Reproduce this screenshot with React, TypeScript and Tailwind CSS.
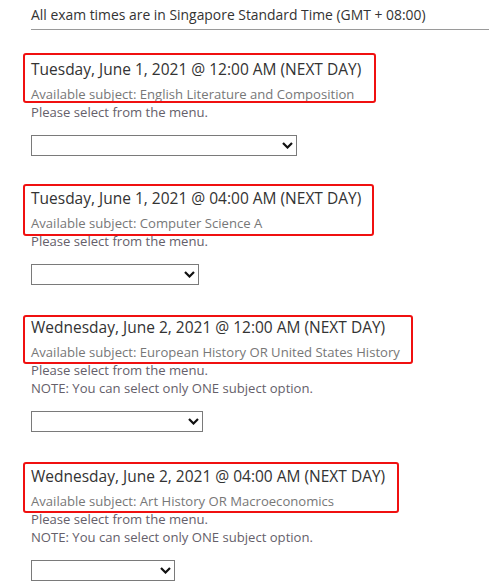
const exams = [
  {
    when: 'Tuesday, June 1, 2021 @ 12:00 AM (NEXT DAY)',
    subject: 'English Literature and Composition',
    note: false,
    selectW: 'w-[266px]',
    box: 'top-[-6px] w-[353px] h-[50px]',
    gap: 'mt-[29px]',
  },
  {
    when: 'Tuesday, June 1, 2021 @ 04:00 AM (NEXT DAY)',
    subject: 'Computer Science A',
    note: false,
    selectW: 'w-[168px]',
    box: 'top-[-4px] w-[351px] h-[52px]',
    gap: 'mt-[32px]',
  },
  {
    when: 'Wednesday, June 2, 2021 @ 12:00 AM (NEXT DAY)',
    subject: 'European History OR United States History',
    note: true,
    selectW: 'w-[172px]',
    box: 'top-[-2px] w-[390px] h-[49px]',
    gap: 'mt-[32px]',
  },
  {
    when: 'Wednesday, June 2, 2021 @ 04:00 AM (NEXT DAY)',
    subject: 'Art History OR Macroeconomics',
    note: true,
    selectW: 'w-[144px]',
    box: 'top-[-4px] w-[376px] h-[51px]',
    gap: 'mt-[34px]',
  },
]

function Dropdown({ width }: { width: string }) {
  return (
    <div className={`relative mt-[14px] ${width}`}>
      <select className="block h-[21px] w-full appearance-none border border-[#7a7a7a] bg-white outline-none" />
      <svg
        className="pointer-events-none absolute right-[4px] top-[7px]"
        width="11"
        height="7"
        viewBox="0 0 11 7"
        fill="none"
      >
        <path d="M1 1l4.5 4.5L10 1" stroke="#111" strokeWidth="2.2" />
      </svg>
    </div>
  )
}

export default function App() {
  return (
    <div
      className="min-h-screen bg-white pl-[31px] pb-8"
      style={{ fontFamily: '"Open Sans", "Liberation Sans", sans-serif' }}
    >
      <div className="border-b border-[#9a9a9a] pt-[5px] pb-[4px] text-[13.9px] leading-[20px] text-[#333]">
        All exam times are in Singapore Standard Time (GMT + 08:00)
      </div>

      {exams.map((e) => (
        <div key={e.when} className={`relative ${e.gap}`}>
          <div className="text-[15.5px] leading-[20px] text-[#333]">{e.when}</div>
          <div className="mt-[6px] text-[13.1px] leading-[18px] text-[#777]">
            Available subject: {e.subject}
          </div>
          <div className="text-[13.1px] leading-[18px] text-[#65606a]">Please select from the menu.</div>
          {e.note && (
            <div className="text-[13.1px] leading-[18px] text-[#65606a]">
              NOTE: You can select only ONE subject option.
            </div>
          )}
          <Dropdown width={e.selectW} />
          {/* annotation box drawn over the heading */}
          <div
            className={`pointer-events-none absolute left-[-8px] rounded-[3px] border-2 border-[#f01010] ${e.box}`}
          />
        </div>
      ))}
    </div>
  )
}
